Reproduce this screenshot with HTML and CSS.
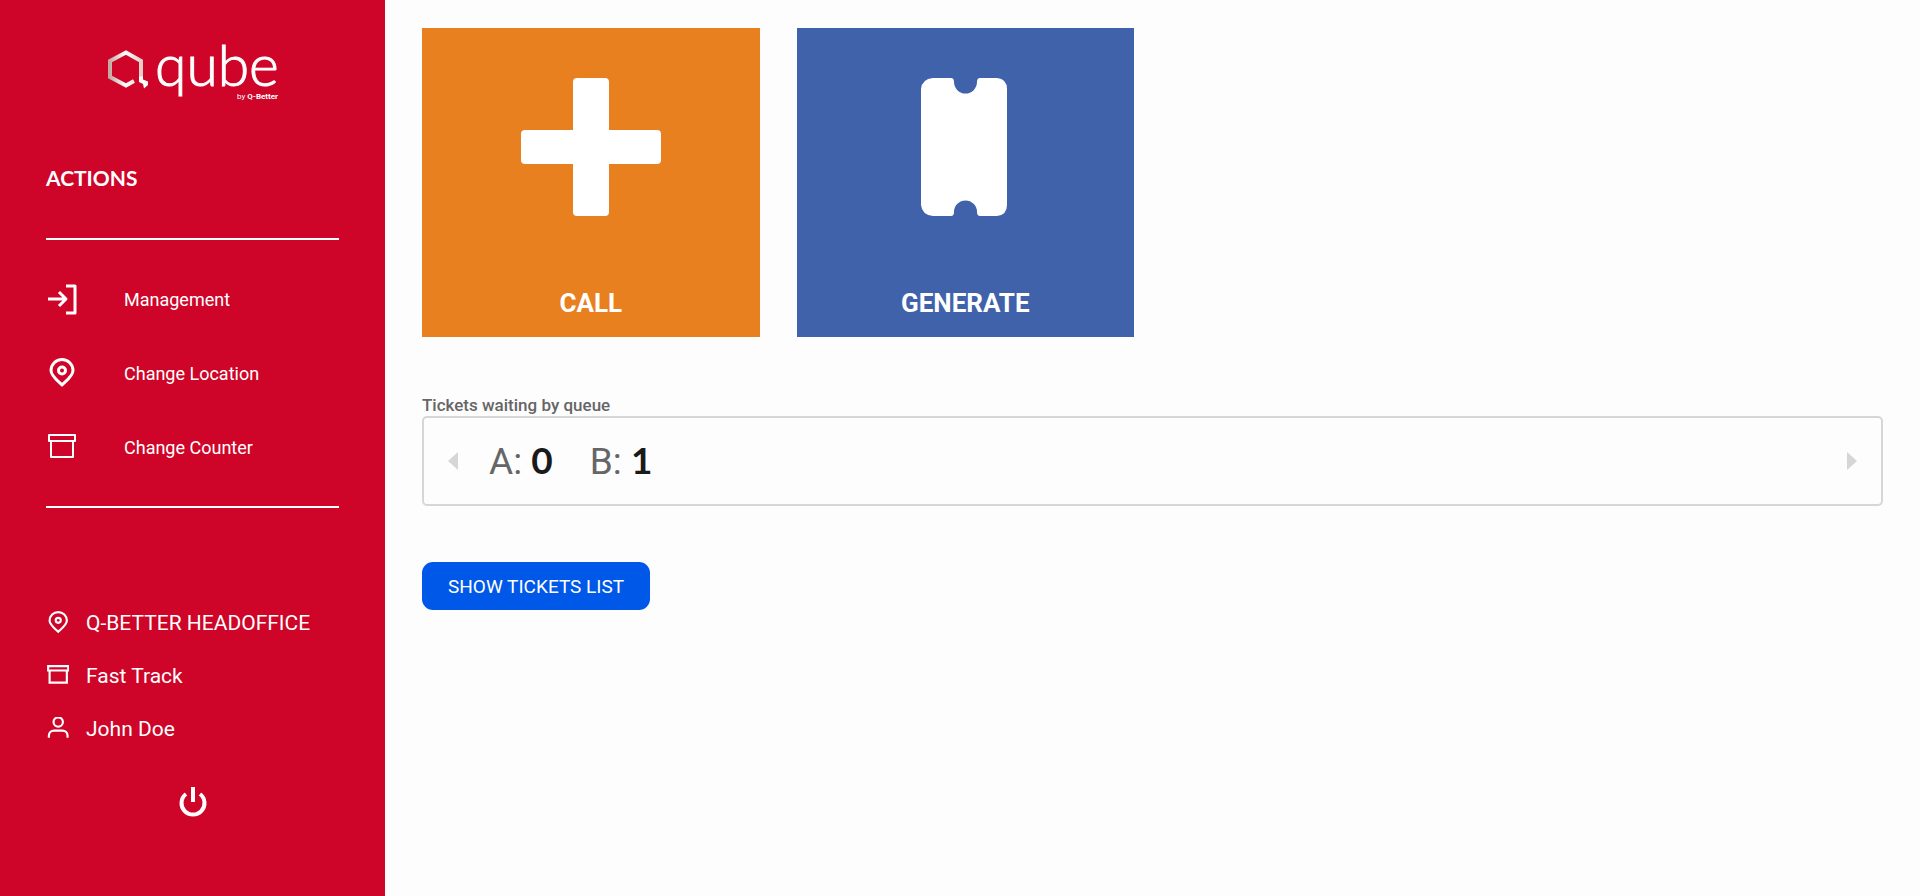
FILE: index.html
```
<!DOCTYPE html>
<html lang="en">
<head>
    <meta charset="UTF-8">
    <meta name="viewport" content="width=device-width, initial-scale=1.0">
    <title>Qube</title>
    <link rel="stylesheet" href="styles.css">
</head>
<body>
    <aside class="sidebar">
        <svg class="logo" viewBox="0 0 180 76" role="img" aria-label="qube by Q-Better">
            <defs>
                <linearGradient id="hex" x1="0" y1="0" x2="1" y2="0">
                    <stop offset="0" stop-color="#c4aaa2"/>
                    <stop offset="0.5" stop-color="#fff"/>
                    <stop offset="1" stop-color="#e8ccc8"/>
                </linearGradient>
            </defs>
            <path d="M28 49 20 53.500 4 45V29L20 20.500 35 29V46" fill="none" stroke="url(#hex)" stroke-width="4"/>
            <path d="M33 44.500H37V47.500L42 49.500V53L38 56.500 37 52 33 50Z" fill="#fff"/>
            <text class="logo-name" x="49" y="54">qube</text>
            <text class="logo-by" x="172" y="67" text-anchor="end">by <tspan font-weight="700">Q-Better</tspan></text>
        </svg>

        <h2>ACTIONS</h2>

        <nav class="menu">
            <a href="#">
                <svg viewBox="0 0 32 32"><path d="M2 16H20M13 9L20 16L13 23M20 3H29V30H20"/></svg>
                Management
            </a>
            <a href="#">
                <svg viewBox="0 0 32 32"><path d="M16 28C12 24 5 19 5 13.500A11 11 0 0 1 27 13.500C27 19 20 24 16 28Z"/><circle cx="16" cy="13.500" r="3.500"/></svg>
                Change Location
            </a>
            <a href="#">
                <svg class="thin" viewBox="0 0 32 32"><path d="M3 4H29V10H3ZM5 10V26H27V10"/></svg>
                Change Counter
            </a>
        </nav>

        <ul class="info">
            <li>
                <svg viewBox="0 0 32 32"><path d="M17 29C13 25 5 19 5 13.500A12 12 0 0 1 29 13.500C29 19 21 25 17 29Z"/><circle cx="17" cy="13" r="3.500"/></svg>
                Q-BETTER HEADOFFICE
            </li>
            <li>
                <svg viewBox="0 0 32 32"><path d="M3 3H31V9H3ZM5 9V26H29V9"/></svg>
                Fast Track
            </li>
            <li>
                <svg viewBox="0 0 32 32"><circle cx="17" cy="7" r="6.500"/><path d="M4 29V26A7 7 0 0 1 11 19H23A7 7 0 0 1 30 26V29"/></svg>
                John Doe
            </li>
        </ul>

        <button class="power" type="button" aria-label="Log out">
            <svg viewBox="0 0 32 32"><path d="M16 1V16M9 8A11.500 11.500 0 1 0 23 8"/></svg>
        </button>
    </aside>

    <main class="content">
        <div class="tiles">
            <button class="tile call" type="button">
                <svg viewBox="0 0 140 140"><rect x="52" width="36" height="138" rx="4"/><rect y="52" width="140" height="34" rx="4"/></svg>
                CALL
            </button>
            <button class="tile generate" type="button">
                <svg viewBox="0 0 140 140"><path d="M38 0H56Q59 0 59 4A11 11 0 0 0 82 4Q82 0 85 0H102Q112 1 112 11V127Q112 137 102 138H85Q82 138 82 134A11 11 0 0 0 59 134Q59 138 56 138H38Q27 137 26 127V11Q27 1 38 0Z"/></svg>
                GENERATE
            </button>
        </div>

        <h3>Tickets waiting by queue</h3>
        <div class="queue">
            <button class="arrow" type="button" aria-label="Previous"><svg viewBox="0 0 10 18"><path d="M10 0V18L0 9Z"/></svg></button>
            <div class="counts">
                <span>A: <b>0</b></span>
                <span>B: <b>1</b></span>
            </div>
            <button class="arrow" type="button" aria-label="Next"><svg viewBox="0 0 10 18"><path d="M0 0V18L10 9Z"/></svg></button>
        </div>

        <button class="btn" type="button">SHOW TICKETS LIST</button>
    </main>
</body>
</html>
```
FILE: styles.css
```
* {
    box-sizing: border-box;
}

body {
    font-family: Roboto, sans-serif;
    margin: 0;
    min-height: 100vh;
    display: flex;
    background-color: #fdfdfd;
}

button {
    font-family: inherit;
    border: none;
    padding: 0;
    cursor: pointer;
}

/* Sidebar */
.sidebar {
    width: 385px;
    flex-shrink: 0;
    padding: 32px 46px;
    background-color: #ce0528;
    color: #fff;
    display: flex;
    flex-direction: column;
}

.sidebar svg {
    flex-shrink: 0;
}

.logo {
    width: 180px;
    margin-left: 60px;
    overflow: visible;
}

.logo-name {
    font-family: Lato, sans-serif;
    font-size: 57px;
    font-weight: 300;
    fill: #fff;
    stroke: #fff;
    stroke-width: 1px;
}

.logo-by {
    font-size: 8px;
    fill: #fff;
}

.sidebar h2 {
    margin: 57px 0 47px;
    font-family: Lato, sans-serif;
    font-size: 21px;
    line-height: 26px;
}

.menu {
    border-top: 2px solid #fff;
    border-bottom: 2px solid #fff;
    padding: 22px 0;
}

.menu a {
    display: flex;
    align-items: center;
    gap: 46px;
    height: 74px;
    color: #fff;
    font-size: 18px;
    text-decoration: none;
}

.menu svg,
.power svg {
    width: 32px;
    height: 32px;
    fill: none;
    stroke: #fff;
    stroke-width: 3;
    stroke-linejoin: round;
}

.menu .thin {
    stroke-width: 2;
}

.info {
    list-style: none;
    margin: 88px 0 0;
    padding: 0;
}

.info li {
    display: flex;
    align-items: center;
    gap: 17px;
    height: 53px;
    font-size: 21px;
}

.info svg {
    width: 23px;
    height: 23px;
    fill: none;
    stroke: #fff;
    stroke-width: 3;
}

.power {
    align-self: center;
    margin-top: 31px;
    background: none;
}

.power svg {
    display: block;
    stroke-width: 4;
}

/* Main area */
.content {
    flex: 1;
    padding: 28px 37px;
}

.tiles {
    display: grid;
    grid-template-columns: repeat(4, 1fr);
    gap: 37px;
}

.tile {
    display: flex;
    flex-direction: column;
    align-items: center;
    justify-content: space-between;
    padding: 50px 20px 18px;
    height: 309px;
    color: #fff;
    font-size: 26px;
    font-weight: 700;
    line-height: 32px;
}

.tile svg {
    width: 140px;
    fill: #fff;
}

.call {
    background-color: #e98020;
}

.generate {
    background-color: #4062ab;
}

.content h3 {
    margin: 58px 0 0;
    color: #666;
    font-size: 17px;
    font-weight: 500;
    line-height: 21px;
}

.queue {
    display: flex;
    align-items: center;
    height: 90px;
    padding: 0 24px;
    border: 2px solid #d6d6d8;
    border-radius: 5px;
}

.arrow {
    background: none;
}

.arrow svg {
    display: block;
    width: 10px;
    height: 18px;
    fill: #d6d6d8;
}

.counts {
    flex: 1;
    display: flex;
    gap: 37px;
    padding-left: 31px;
    color: #666;
    font-size: 37px;
    line-height: 44px;
    font-weight: 400;
}

.counts b {
    font-family: Lato, sans-serif;
    font-weight: 700;
    color: #1a1a1a;
}

.btn {
    margin-top: 56px;
    padding: 0 26px;
    height: 48px;
    background-color: #0058e8;
    color: #fff;
    border-radius: 11px;
    font-size: 19px;
}
```
